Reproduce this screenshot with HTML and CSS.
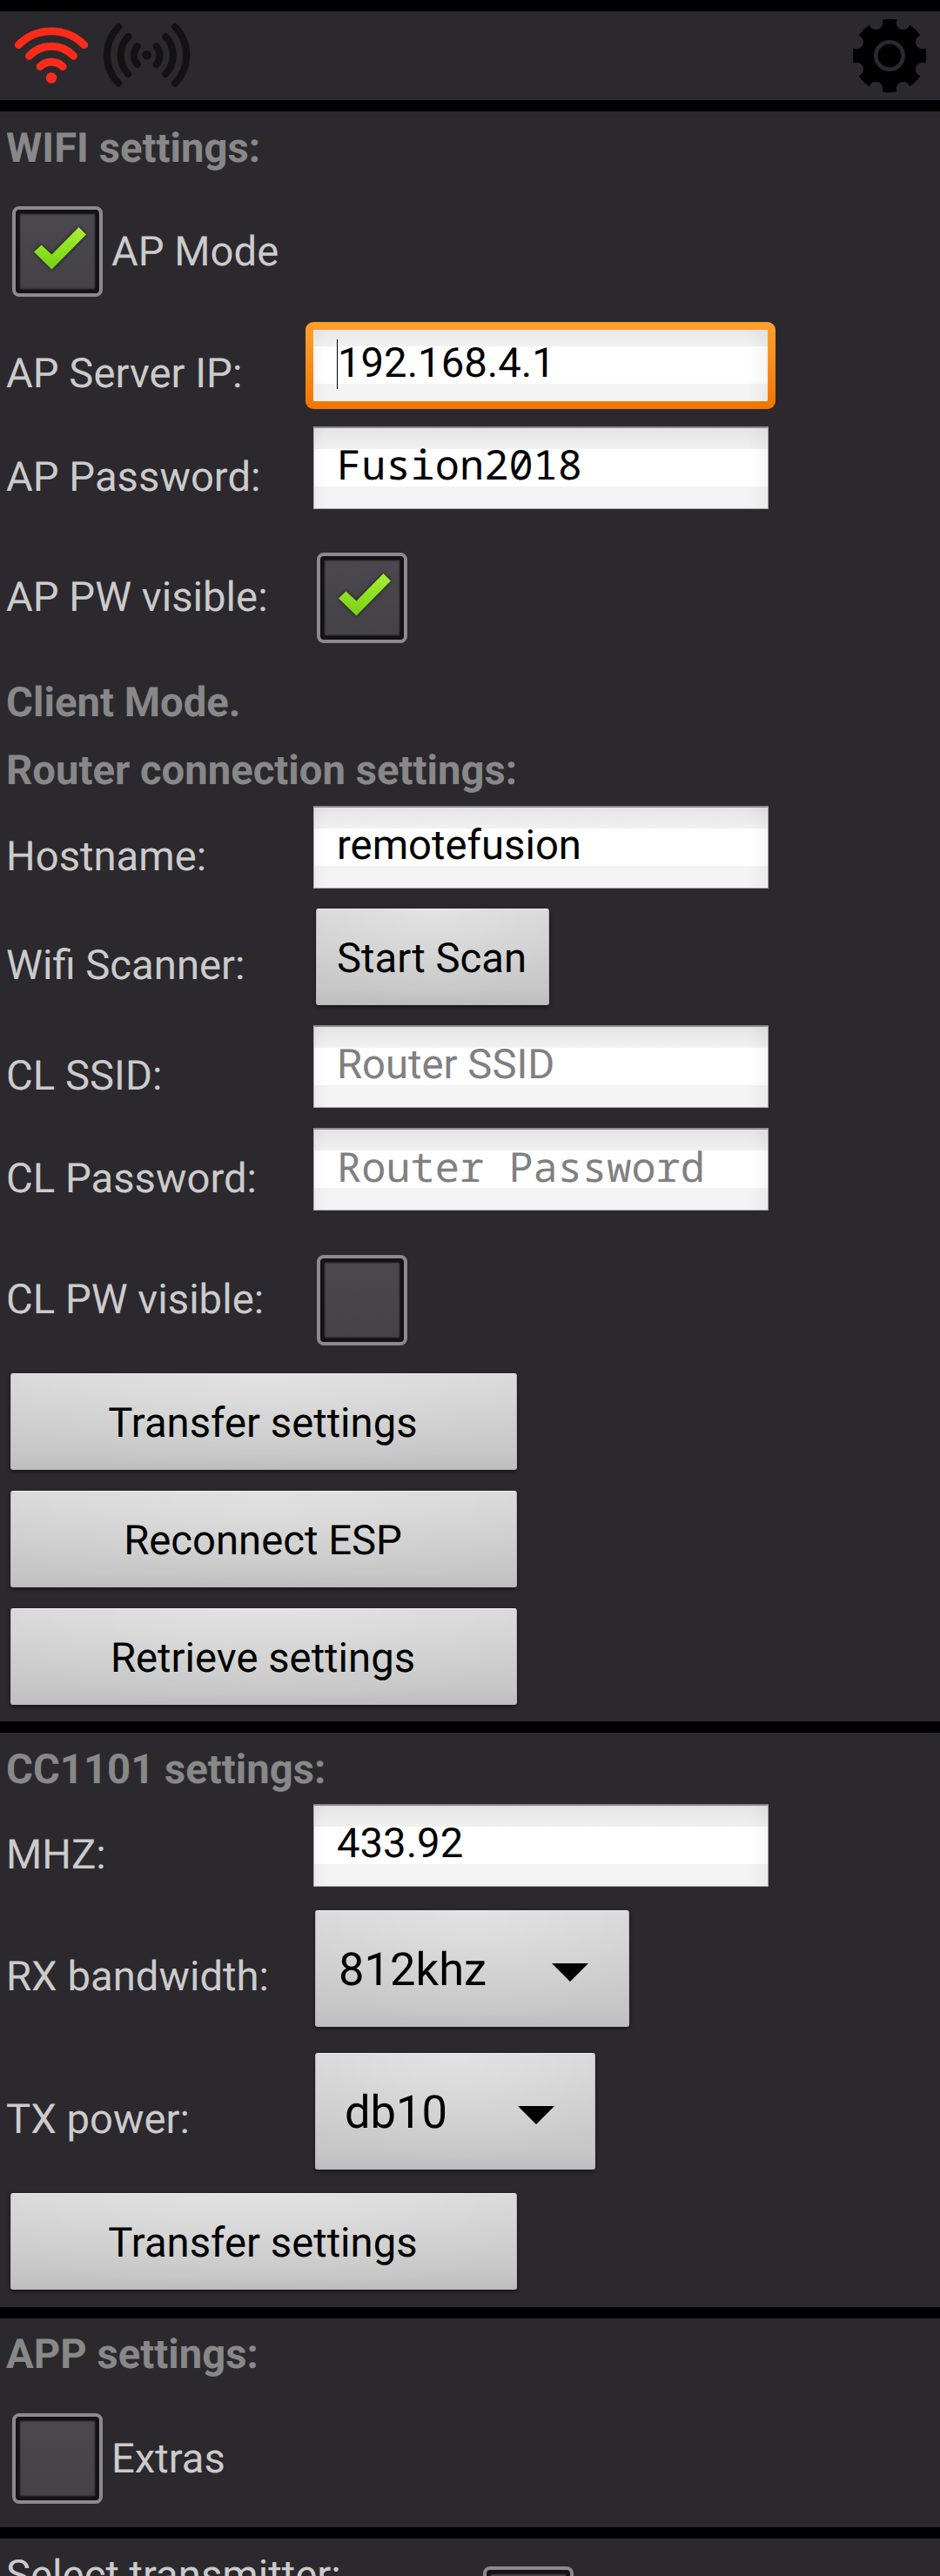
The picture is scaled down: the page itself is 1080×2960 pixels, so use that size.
FILE: index.html
```html
<!DOCTYPE html>
<html lang="en">
<head>
<meta charset="utf-8">
<title>Settings</title>
<link rel="stylesheet" href="styles.css">
</head>
<body>
<svg class="defs" width="0" height="0" aria-hidden="true">
  <defs>
    <linearGradient id="green" x1="0" y1="0" x2="0" y2="1">
      <stop offset="0" stop-color="#abec3b"/>
      <stop offset="0.4" stop-color="#93e522"/>
      <stop offset="1" stop-color="#7bd016"/>
    </linearGradient>
  </defs>
</svg>
<main class="screen">
  <header class="topbar">
    <svg class="icon-wifi" width="86" height="66" viewBox="16 31 86 66" fill="none" stroke="#ff2a1a" stroke-width="8.8" stroke-linecap="round">
      <path d="M21.3 51.7A53 53 0 0 1 96.7 51.7"/>
      <path d="M33.5 64.3A35 35 0 0 1 84.5 64.3"/>
      <path d="M46 76.5A19 19 0 0 1 72.2 76.5"/>
      <circle cx="59" cy="89.5" r="6.2" fill="#ff2a1a" stroke="none"/>
    </svg>
    <svg class="icon-antenna" width="100" height="74" viewBox="119 26 100 74" fill="none" stroke="#121212" stroke-width="8" stroke-linecap="round">
      <path d="M136.2 31A46 46 0 0 0 136.2 95.7M147.3 42A31 31 0 0 0 147.3 85M157.8 53A16 16 0 0 0 157.8 74"/>
      <path d="M201 31A46 46 0 0 1 201 95.7M190.2 42A31 31 0 0 1 190.2 85M179.6 53A16 16 0 0 1 179.6 74"/>
      <circle cx="168.7" cy="63.3" r="5.4" fill="#121212" stroke="none"/>
    </svg>
    <svg class="icon-gear" width="86" height="86" viewBox="-43 -43 86 86">
      <circle r="42.3" fill="#000"/>
      <g fill="#2b292e">
        <circle cx="15.7" cy="-37.9" r="8"/><circle cx="37.9" cy="-15.7" r="8"/>
        <circle cx="37.9" cy="15.7" r="8"/><circle cx="15.7" cy="37.9" r="8"/>
        <circle cx="-15.7" cy="37.9" r="8"/><circle cx="-37.9" cy="15.7" r="8"/>
        <circle cx="-37.9" cy="-15.7" r="8"/><circle cx="-15.7" cy="-37.9" r="8"/>
      </g>
      <circle r="15.7" fill="none" stroke="#2b292e" stroke-width="4.6"/>
    </svg>
  </header>

  <section class="panel wifi">
    <h2 class="heading first">WIFI settings:</h2>
    <div class="row check-row lead">
      <span class="checkbox"><svg width="104" height="104"><path class="tick" d="M25 52.5L33.5 44.5L45.5 55.5L76.5 24L85 32.5L45.5 72.5Z"/></svg></span>
      <span class="label">AP Mode</span>
    </div>
    <div class="row field-row tight">
      <span class="label">AP Server IP:</span>
      <div class="input focused"><span class="caret"></span>192.168.4.1</div>
    </div>
    <div class="row field-row last">
      <span class="label">AP Password:</span>
      <div class="input mono">Fusion2018</div>
    </div>
    <div class="row check-row before-heading">
      <span class="label">AP PW visible:</span>
      <span class="checkbox"><svg width="104" height="104"><path class="tick" d="M25 52.5L33.5 44.5L45.5 55.5L76.5 24L85 32.5L45.5 72.5Z"/></svg></span>
    </div>
    <h2 class="heading client">Client Mode.</h2>
    <h2 class="heading router">Router connection settings:</h2>
    <div class="row field-row">
      <span class="label">Hostname:</span>
      <div class="input">remotefusion</div>
    </div>
    <div class="row scan-row">
      <span class="label">Wifi Scanner:</span>
      <div class="button scan">Start Scan</div>
    </div>
    <div class="row field-row">
      <span class="label">CL SSID:</span>
      <div class="input hint">Router SSID</div>
    </div>
    <div class="row field-row last">
      <span class="label">CL Password:</span>
      <div class="input mono hint">Router Password</div>
    </div>
    <div class="row check-row before-buttons">
      <span class="label">CL PW visible:</span>
      <span class="checkbox"></span>
    </div>
    <div class="buttons">
      <div class="button">Transfer settings</div>
      <div class="button">Reconnect ESP</div>
      <div class="button">Retrieve settings</div>
    </div>
  </section>

  <section class="panel radio">
    <h2 class="heading">CC1101 settings:</h2>
    <div class="row field-row">
      <span class="label">MHZ:</span>
      <div class="input">433.92</div>
    </div>
    <div class="row select-row">
      <span class="label">RX bandwidth:</span>
      <div class="select rx">812khz<svg class="arrow" width="42" height="21"><path d="M0 0H42L21 21Z"/></svg></div>
    </div>
    <div class="row select-row">
      <span class="label">TX power:</span>
      <div class="select tx">db10<svg class="arrow" width="42" height="21"><path d="M0 0H42L21 21Z"/></svg></div>
    </div>
    <div class="buttons">
      <div class="button">Transfer settings</div>
    </div>
  </section>

  <section class="panel app">
    <h2 class="heading">APP settings:</h2>
    <div class="row check-row lead">
      <span class="checkbox"></span>
      <span class="label">Extras</span>
    </div>
  </section>

  <section class="panel transmitter">
    <div class="row">
      <span class="label">Select transmitter:</span>
      <span class="checkbox"></span>
    </div>
  </section>
</main>
</body>
</html>
```
FILE: styles.css
```css
* { box-sizing: border-box; }

body {
  margin: 0;
  background: #000;
}

.defs { display: block; }

.screen {
  width: 1080px;
  height: 2960px;
  overflow: hidden;
  padding-top: 13px;
  display: flex;
  flex-direction: column;
  gap: 13px;
  background: #000;
  font-family: Roboto, sans-serif;
  font-size: 47.25px;
  line-height: 55px;
  text-rendering: geometricPrecision;
  color: #cbcbcb;
  white-space: nowrap;
}

.topbar,
.panel {
  flex: none;
  background: #2b292e;
}

.topbar {
  height: 102px;
  display: flex;
  align-items: flex-start;
  padding: 7px 15px 0 16px;
}

.icon-wifi { margin-top: 11px; }
.icon-antenna { margin: 6px 0 0 17px; }
.icon-gear { margin: 1px 0 0 auto; }

.wifi { height: 1850px; }
.radio { height: 660px; }
.app { height: 240px; }
.transmitter { height: 120px; padding-top: 15px; }

.heading {
  margin: 0;
  padding: 15px 0 0 7px;
  height: 82px;
  font-size: inherit;
  line-height: inherit;
  font-weight: 700;
  color: #888;
}

.heading.first { height: 109px; }
.heading.client { height: 78px; padding-top: 1px; }
.heading.router { height: 69px; padding-top: 1px; }
.app .heading { height: 109px; padding-top: 14px; }

.row {
  display: flex;
  align-items: flex-start;
  padding-left: 7px;
}

.label { width: 353px; flex: none; }

.field-row { height: 118px; }
.field-row.tight { height: 119px; }
.field-row.last { height: 146px; }
.field-row .label { padding-top: 31px; }
.tight + .field-row.last { height: 145px; }
.radio .field-row { height: 122px; }

.check-row { height: 144px; }
.check-row.lead { height: 134px; padding-left: 14px; }
.check-row.before-buttons { height: 136px; }
.check-row .label { padding-top: 24px; }
.check-row.lead .checkbox { margin-left: 0; }
.check-row.lead .label { margin-left: 10px; padding-top: 25px; }

.scan-row { height: 134px; }
.scan-row .label { padding-top: 38px; }

.select-row { height: 164px; }
.select-row + .select-row { height: 161px; }
.select-row .label { padding-top: 49px; }

.transmitter .label { width: 544px; }
.transmitter .checkbox { margin: 17px 0 0 4px; }

.checkbox {
  flex: none;
  width: 104px;
  height: 104px;
  margin-left: 4px;
  border: 4px solid #8b8a8d;
  border-radius: 8px;
  background: linear-gradient(#4b494e, #444246);
  box-shadow: inset 0 0 0 4px #131315, inset 0 0 2px 5px #131315;
}

.checkbox svg {
  display: block;
  margin: -4px;
}

.tick {
  fill: url(#green);
  filter: drop-shadow(0 0 2px rgba(0, 0, 0, 0.7));
}

.input {
  width: 523px;
  height: 95px;
  padding: 16px 0 0 26px;
  color: #000;
  border: 1px solid #aaa;
  border-top: 2px solid #8c8c8c;
  background:
    linear-gradient(90deg, rgba(0, 0, 0, 0.03), transparent 14px, transparent 500px, rgba(0, 0, 0, 0.04)),
    linear-gradient(#e4e4e4, #f1f1f1 24px, #fff 24px, #fff 67px, #f3f3f3 67px);
}

.input.mono {
  padding-top: 14px;
  font-family: "Droid Sans Mono", "Noto Sans Mono", "Liberation Mono", monospace;
  font-size: 47px;
}

.input.hint { color: #808080; }
.input.mono.hint { padding-top: 15px; }

.input.focused {
  position: relative;
  width: 540px;
  height: 100px;
  margin: -1px 0 0 -9px;
  padding: 11px 0 0 28px;
  border: 9px solid transparent;
  border-radius: 9px;
  background:
    linear-gradient(90deg, rgba(0, 0, 0, 0.03), transparent 14px, transparent 500px, rgba(0, 0, 0, 0.04)) padding-box,
    linear-gradient(#e8e8e8, #f1f1f1 19px, #fff 19px, #fff 62px, #f3f3f3 62px) padding-box,
    linear-gradient(#ff9f2c, #fb9623 28%, #f17400) border-box;
}

.caret {
  position: absolute;
  left: 27px;
  top: 11px;
  width: 1px;
  height: 57px;
  background: #000;
}

.buttons {
  display: flex;
  flex-direction: column;
  gap: 24px;
  padding-left: 12px;
}

.button,
.select {
  color: #000;
  border: 1px solid #b9b9b9;
  border-top-color: #f0f0f0;
  border-radius: 3px;
  background:
    radial-gradient(ellipse 75% 100% at 50% 0, rgba(255, 255, 255, 0.3), transparent),
    linear-gradient(#d6d6d6, #c6c6c6 85%, #bebebe);
  box-shadow: 0 2px 4px rgba(0, 0, 0, 0.55);
}

.button {
  width: 582px;
  height: 111px;
  padding: 29px 2px 0 0;
  text-align: center;
}

.button.scan {
  width: 268px;
  margin-left: 3px;
}

.select {
  display: flex;
  height: 134px;
  margin-left: 2px;
  padding: 36px 46px 0 26px;
  font-size: 52.5px;
  line-height: 62px;
}

.select.rx { width: 361px; }
.select.tx { width: 322px; padding-left: 33px; }

.arrow {
  margin: 24px 0 0 auto;
}
```
